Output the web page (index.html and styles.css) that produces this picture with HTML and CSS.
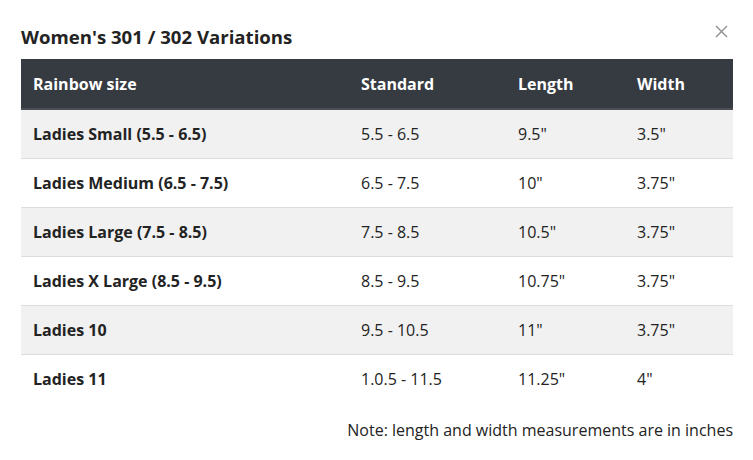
FILE: index.html
```html
<!DOCTYPE html>
<html>
<head>
<meta charset="utf-8">
<link rel="stylesheet" href="styles.css">
</head>
<body>
<div class="modal">
  <div class="modal-head">
    <h2 class="title">Women's 301 / 302 Variations</h2>
    <button class="close" aria-label="Close"><svg width="13" height="13" viewBox="0 0 13 13"><path d="M1 1L12 12M12 1L1 12" stroke="#8f8f8f" stroke-width="1.4" fill="none"/></svg></button>
  </div>
  <table class="sizes">
    <thead>
      <tr><th class="c1">Rainbow size</th><th class="c2">Standard</th><th class="c3">Length</th><th class="c4">Width</th></tr>
    </thead>
    <tbody>
      <tr><td class="name">Ladies Small (5.5 - 6.5)</td><td>5.5 - 6.5</td><td>9.5"</td><td>3.5"</td></tr>
      <tr><td class="name">Ladies Medium (6.5 - 7.5)</td><td>6.5 - 7.5</td><td>10"</td><td>3.75"</td></tr>
      <tr><td class="name">Ladies Large (7.5 - 8.5)</td><td>7.5 - 8.5</td><td>10.5"</td><td>3.75"</td></tr>
      <tr><td class="name">Ladies X Large (8.5 - 9.5)</td><td>8.5 - 9.5</td><td>10.75"</td><td>3.75"</td></tr>
      <tr><td class="name">Ladies 10</td><td>9.5 - 10.5</td><td>11"</td><td>3.75"</td></tr>
      <tr><td class="name">Ladies 11</td><td>1.0.5 - 11.5</td><td>11.25"</td><td>4"</td></tr>
    </tbody>
  </table>
  <p class="note">Note: length and width measurements are in inches</p>
</div>
</body>
</html>
```
FILE: styles.css
```css
html, body {
  margin: 0;
  padding: 0;
  background: #fff;
}
body {
  font-family: "Open Sans", "Liberation Sans", sans-serif;
  color: #232323;
}
.modal {
  width: 712px;
  padding: 0 20px 0 21px;
}
.modal-head {
  display: flex;
  justify-content: space-between;
  align-items: flex-start;
  height: 59px;
}
.title {
  margin: 0;
  padding-top: 24px;
  font-size: 18.6px;
  line-height: 26px;
  font-weight: 700;
  color: #232323;
}
.close {
  border: 0;
  background: none;
  padding: 0;
  margin: 25px 5px 0 0;
  width: 13px;
  height: 13px;
  display: block;
  cursor: pointer;
}
.close svg { display: block; }
.sizes {
  width: 712px;
  border-collapse: collapse;
  font-size: 16px;
  table-layout: fixed;
}
.sizes thead tr {
  background: #363a41;
  border-bottom: 2px solid #4b4f56;
}
.sizes th {
  color: #fff;
  font-weight: 700;
  text-align: left;
  height: 49px;
  padding: 0 12px;
  line-height: 20px;
}
.c1 { width: 304px; }
.c2 { width: 133px; }
.c3 { width: 95px; }
.sizes td {
  height: 48px;
  padding: 0 12px;
  line-height: 20px;
  border-bottom: 1px solid #dcdcdc;
}
.sizes tbody tr:nth-child(odd) { background: #f1f1f1; }
.sizes tbody tr:last-child td { border-bottom: 0; }
.sizes td.name { font-weight: 700; }
.note {
  margin: 17px 0 0;
  text-align: right;
  font-size: 16px;
  line-height: 20px;
}
```
